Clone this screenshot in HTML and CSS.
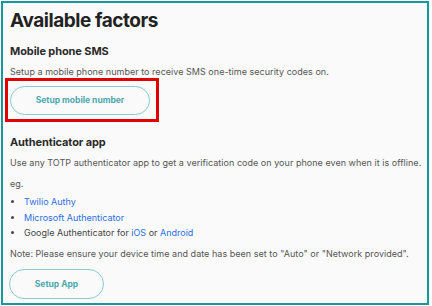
FILE: index.html
```html
<!DOCTYPE html>
<html>
<head>
<meta charset="utf-8">
<link rel="stylesheet" href="styles.css">
</head>
<body>
<div class="frame">
  <h1 class="title">Available factors</h1>
  <h2 class="sub">Mobile phone SMS</h2>
  <p class="text">Setup a mobile phone number to receive SMS one-time security codes on.</p>
  <div class="highlight">
    <button class="btn btn-wide">Setup mobile number</button>
  </div>
  <h2 class="sub sub2">Authenticator app</h2>
  <p class="text text2">Use any TOTP authenticator app to get a verification code on your phone even when it is offline.</p>
  <p class="text eg">eg.</p>
  <ul class="list">
    <li><a class="link">Twilio Authy</a></li>
    <li><a class="link">Microsoft Authenticator</a></li>
    <li>Google Authenticator for <a class="link">iOS</a> or <a class="link">Android</a></li>
  </ul>
  <p class="text note">Note: Please ensure your device time and date has been set to "Auto" or "Network provided".</p>
  <button class="btn btn-app">Setup App</button>
</div>
</body>
</html>
```
FILE: styles.css
```css
html, body { margin: 0; padding: 0; background: #ffffff; }
.frame {
  margin: 1px 0 0 1px;
  width: 428px;
  height: 304px;
  box-sizing: border-box;
  border: 2px solid #17979e;
  background: #fafafa;
  padding: 6px 0 0 7px;
  font-family: Inter, "Noto Sans", sans-serif;
  color: #333;
}
.title {
  margin: 0;
  font-size: 19px;
  line-height: 24px;
  font-weight: 700;
  color: #222;
  letter-spacing: -0.45px;
}
.sub {
  margin: 11px 0 0;
  font-size: 11px;
  line-height: 14px;
  font-weight: 700;
  color: #2a2a2a;
  letter-spacing: -0.1px;
}
.sub2 { margin-top: 13px; }
.text {
  margin: 8px 0 0;
  font-size: 9px;
  line-height: 12px;
  color: #555;
  letter-spacing: 0.03px;
}
.eg { margin-top: 9px; }
.list {
  margin: 4px 0 0;
  padding-left: 14px;
  font-size: 9px;
  line-height: 15.5px;
  color: #444;
}
.link { color: #2b6fe6; }
.highlight {
  margin: 0 0 0 -5px;
  width: 154px;
  height: 44px;
  box-sizing: border-box;
  border: 3px solid #e00000;
  display: flex;
  align-items: center;
  padding-left: 2px;
}
.btn {
  font-family: Inter, "Noto Sans", sans-serif;
  background: transparent;
  border: 1px solid #86cccd;
  border-radius: 15px;
  color: #4aa8ae;
  font-weight: 700;
  font-size: 8.5px;
  padding: 0;
  height: 29px;
}
.btn-wide { width: 140px; }
.btn-app { width: 95px; height: 30px; margin-top: 9px; margin-left: -1px; }
.note { margin-top: 7px; }
```
